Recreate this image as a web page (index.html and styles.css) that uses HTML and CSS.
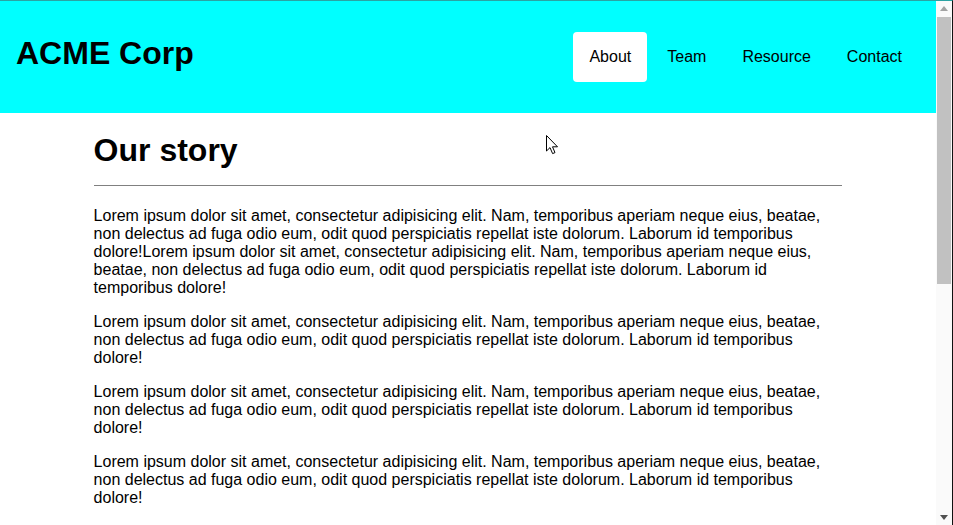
FILE: index.html
```html
<!DOCTYPE html>
<html lang="en">
<head>
<meta charset="utf-8">
<title>ACME Corp</title>
<link rel="stylesheet" href="styles.css">
</head>
<body>
<div class="frame">
  <div class="page">
    <header class="site-header">
      <h1 class="brand">ACME Corp</h1>
      <nav class="nav">
        <a class="nav-link active" href="#">About</a>
        <a class="nav-link" href="#">Team</a>
        <a class="nav-link" href="#">Resource</a>
        <a class="nav-link" href="#">Contact</a>
      </nav>
    </header>
    <main class="content">
      <h2 class="title">Our story</h2>
      <hr class="rule">
      <p>Lorem ipsum dolor sit amet, consectetur adipisicing elit. Nam, temporibus aperiam neque eius, beatae, non delectus ad fuga odio eum, odit quod perspiciatis repellat iste dolorum. Laborum id temporibus dolore!Lorem ipsum dolor sit amet, consectetur adipisicing elit. Nam, temporibus aperiam neque eius, beatae, non delectus ad fuga odio eum, odit quod perspiciatis repellat iste dolorum. Laborum id temporibus dolore!</p>
      <p>Lorem ipsum dolor sit amet, consectetur adipisicing elit. Nam, temporibus aperiam neque eius, beatae, non delectus ad fuga odio eum, odit quod perspiciatis repellat iste dolorum. Laborum id temporibus dolore!</p>
      <p>Lorem ipsum dolor sit amet, consectetur adipisicing elit. Nam, temporibus aperiam neque eius, beatae, non delectus ad fuga odio eum, odit quod perspiciatis repellat iste dolorum. Laborum id temporibus dolore!</p>
      <p>Lorem ipsum dolor sit amet, consectetur adipisicing elit. Nam, temporibus aperiam neque eius, beatae, non delectus ad fuga odio eum, odit quod perspiciatis repellat iste dolorum. Laborum id temporibus dolore!</p>
    </main>
    <svg class="cursor" width="13" height="20" viewBox="0 0 13 20" aria-hidden="true">
      <path d="M0.5 0.5 L0.5 16 L4 12.6 L6.6 18.6 L9 17.6 L6.5 11.8 L11.5 11.8 Z" fill="#fff" stroke="#000" stroke-width="1" stroke-linejoin="miter"/>
    </svg>
  </div>
  <div class="scrollbar" aria-hidden="true">
    <div class="sb-btn">
      <svg width="16" height="16" viewBox="0 0 16 16"><path d="M4 10 L12 10 L8 5 Z" fill="#a3a3a3"/></svg>
    </div>
    <div class="sb-track">
      <div class="sb-thumb"></div>
    </div>
    <div class="sb-btn">
      <svg width="16" height="16" viewBox="0 0 16 16"><path d="M4 6 L12 6 L8 11 Z" fill="#505050"/></svg>
    </div>
  </div>
</div>
</body>
</html>
```

FILE: styles.css
```css
html, body {
  margin: 0;
  padding: 0;
  height: 100%;
  overflow: hidden;
  background: #fff;
}

body {
  font-family: "Liberation Sans", Arial, sans-serif;
  color: #000;
}

.frame {
  display: flex;
  height: 525px;
  box-sizing: border-box;
  border-top: 1px solid #2aa3a3;
  border-right: 1px solid #111;
}

.page {
  position: relative;
  flex: 1;
  overflow: hidden;
}

.site-header {
  height: 112px;
  background: #00ffff;
  display: flex;
  align-items: center;
  justify-content: space-between;
  padding: 0 18px 0 16px;
}

.brand {
  margin: 0 0 7px 0;
  font-size: 32px;
  line-height: 37px;
  font-weight: bold;
}

.nav {
  display: flex;
  gap: 4px;
}

.nav-link {
  display: block;
  padding: 16px 16px;
  font-size: 16px;
  line-height: 18px;
  color: #000;
  text-decoration: none;
  border-radius: 4px;
}

.nav-link.active {
  background: #fff;
}

.content {
  width: 80%;
  margin: 0 auto;
}

.title {
  margin: 19px 0 0 0;
  font-size: 32px;
  line-height: 37px;
  font-weight: bold;
}

.rule {
  margin: 16px 0 21px 0;
  border: 0;
  border-top: 1px solid #808080;
  height: 0;
}

.content p {
  margin: 0 0 16px 0;
  font-size: 16px;
  line-height: 18px;
}

.cursor {
  position: absolute;
  left: 546px;
  top: 134px;
}

.scrollbar {
  width: 16px;
  display: flex;
  flex-direction: column;
  background: #fafafa;
}

.sb-btn {
  height: 16px;
  flex: none;
}

.sb-btn svg {
  display: block;
}

.sb-track {
  flex: 1;
  padding: 0 1px 0 1px;
}

.sb-thumb {
  height: 267px;
  background: #c1c1c1;
}
```
